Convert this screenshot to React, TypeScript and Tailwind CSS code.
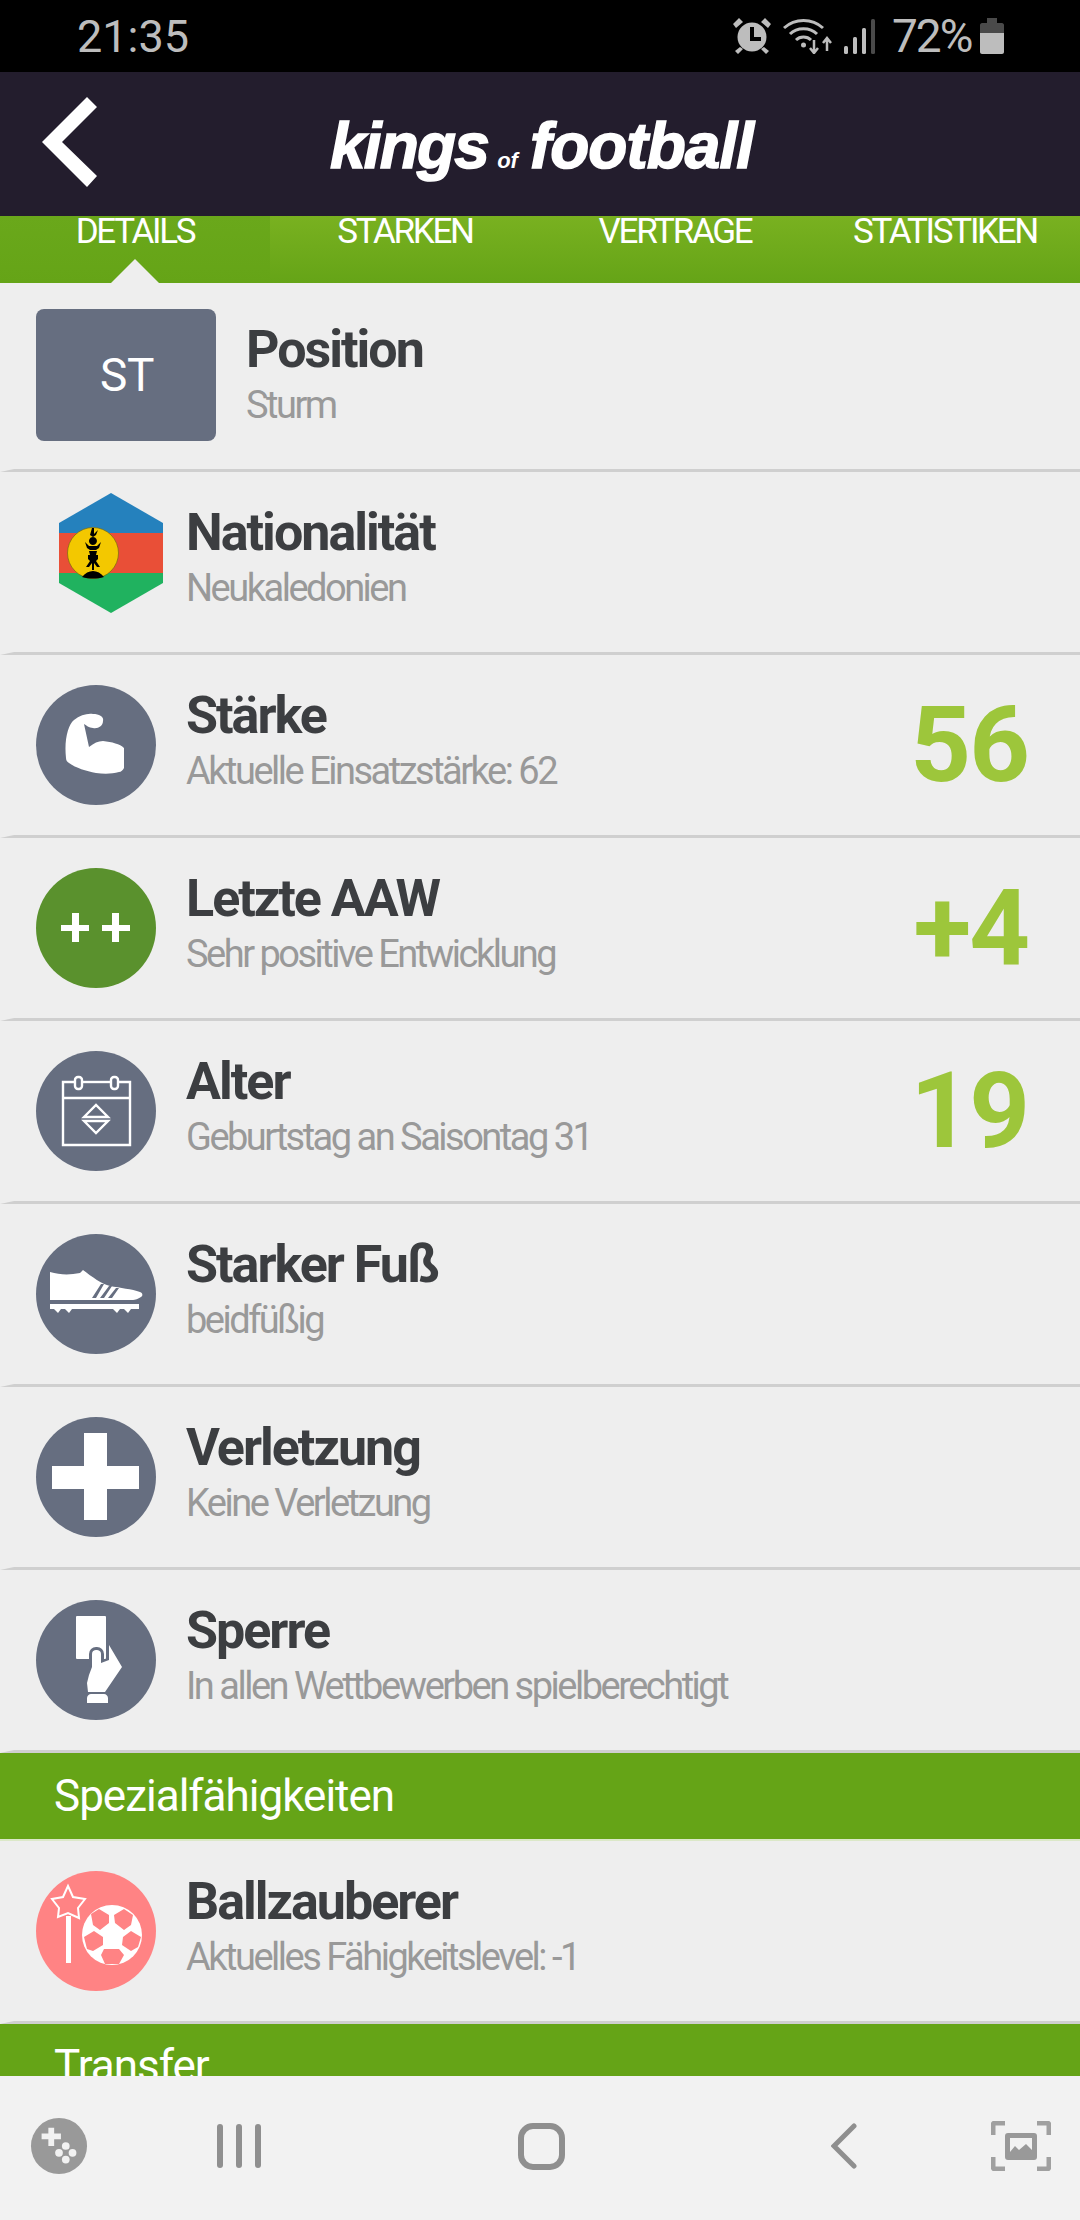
const stats = [
  { title: 'Stärke', sub: 'Aktuelle Einsatzstärke: 62', value: '56', icon: 'muscle' },
  { title: 'Letzte AAW', sub: 'Sehr positive Entwicklung', value: '+4', icon: 'plus', green: true },
  { title: 'Alter', sub: 'Geburtstag an Saisontag 31', value: '19', icon: 'calendar' },
  { title: 'Starker Fuß', sub: 'beidfüßig', icon: 'shoe' },
  { title: 'Verletzung', sub: 'Keine Verletzung', icon: 'cross' },
  { title: 'Sperre', sub: 'In allen Wettbewerben spielberechtigt', icon: 'card' },
]

const Divider = () => (
  <div className="h-0 w-full border-b-[3px] border-l-[14px] border-b-[#cfcfcf] border-l-transparent" />
)

const RowText = ({ title, sub }: { title: string; sub: string }) => (
  <div className="flex flex-col">
    <span className="text-[52px] leading-[52px] font-bold tracking-[-2px] whitespace-nowrap text-[#3c3e41]">{title}</span>
    <span className="text-[38px] leading-[58px] tracking-[-2.5px] whitespace-nowrap text-[#999999]">{sub}</span>
  </div>
)

const Glyph = ({ icon }: { icon: string }) => {
  if (icon === 'muscle') {
    return (
      <path
        fill="#fff"
        d="M30 73C28 55 32 40 38 35C44 30 52 28 57 29C64 29 68 32 67 36C67 41 62 44 57 43C53 43 50 40 48 39L53 62C58 58 62 56 67 56C76 57 84 59 88 63L88 83C87 85 85 87 83 87C76 89 68 89 60 88C50 86 40 83 33 78C31 77 30 75 30 73Z"
      />
    )
  }
  if (icon === 'plus') {
    return (
      <g fill="#fff">
        <rect x="25" y="57" width="28" height="6" />
        <rect x="36" y="45" width="7" height="29" />
        <rect x="66" y="57" width="28" height="6" />
        <rect x="76" y="45" width="7" height="29" />
      </g>
    )
  }
  if (icon === 'calendar') {
    return (
      <g fill="none" stroke="#fff" strokeWidth="2.4">
        <path d="M39 31H27V94H94V31H82" />
        <path d="M27 47H94" />
        <path d="M46 31H75" />
        <rect x="39" y="26" width="7" height="12" rx="3" />
        <rect x="75" y="26" width="7" height="12" rx="3" />
        <path d="M48 66L60 54L72 66Z" />
        <path d="M48 70L60 82L72 70Z" />
      </g>
    )
  }
  if (icon === 'shoe') {
    return (
      <g fill="#fff">
        <path d="M14 38C24 41 34 41 44 39L47 36C56 43 66 50 74 52C84 54 96 55 104 58C107 59 107 62 105 63C102 65 99 66 97 66H14Z" />
        <path d="M14 70H103V75H95L92 79L88 75H84L81 79L77 75H36L33 79L29 75H25L22 79L18 75H14Z" />
        <path d="M56 64L65 50H68L60 64ZM64 64L73 52H76L68 64ZM72 64L80 54H83L76 64Z" fill="#666e80" />
      </g>
    )
  }
  if (icon === 'cross') {
    return <path fill="#fff" d="M48 16H71V49H103V72H71V103H48V72H16V49H48Z" />
  }
  if (icon === 'card') {
    return (
      <g>
        <rect x="40" y="16" width="30" height="43" rx="1" fill="#fff" />
        <rect x="53" y="47" width="15" height="24" rx="7" fill="#666e80" />
        <path
          fill="#fff"
          d="M56 54C56 51 58 50 60 50C63 50 65 51 65 54V63L73 60V45L86 67L69 92H52L51 83L53 75L56 67Z"
        />
        <path d="M51 103V98C51 96 53 94 55 94H68C70 94 72 96 72 98V103Z" fill="#fff" />
      </g>
    )
  }
  return null
}

const CircleIcon = ({ icon, green }: { icon: string; green?: boolean }) => (
  <svg viewBox="0 0 120 120" className="h-[120px] w-[120px] shrink-0">
    <circle cx="60" cy="60" r="60" fill={green ? '#5a912d' : '#666e80'} />
    <Glyph icon={icon} />
  </svg>
)

const FlagIcon = () => (
  <svg viewBox="0 0 128 120" className="mb-[18px] h-[120px] w-[128px]">
    <defs>
      <clipPath id="hex">
        <path d="M75 0L127 30V90L75 120L23 90V30Z" />
      </clipPath>
    </defs>
    <g clipPath="url(#hex)">
      <rect x="20" y="0" width="108" height="40" fill="#2581bd" />
      <rect x="20" y="40" width="108" height="40" fill="#e94f37" />
      <rect x="20" y="80" width="108" height="40" fill="#20b25f" />
    </g>
    <circle cx="57" cy="60" r="25.5" fill="#f3c800" stroke="#7a6a10" strokeWidth="0.7" />
    <path fill="#000" d="M56 35H58V41L62 37L60 42L57 44L54 42ZM57 44A4 4 0 1 1 56.9 44ZM49 49L53 53H61L65 49L63 55L60 57H54L51 55ZM53 58H61L60 62H62V66L60 68L64 74H61L58 70V77H56V70L53 74H50L54 68L52 66V62H54ZM46 84C49 80 53 78 57 78C61 78 65 80 68 84C61 86 53 86 46 84Z" />
  </svg>
)

const BallIcon = () => (
  <svg viewBox="0 0 120 120" className="h-[120px] w-[120px] shrink-0">
    <circle cx="60" cy="60" r="60" fill="#ff8384" />
    <path d="M32.5 45V92" stroke="#fff" strokeWidth="5" fill="none" />
    <path d="M32 15L37 26L49 28L42 37L43 47L32 42L22 46L23 37L16 28L27 26Z" fill="#ff8384" stroke="#fff" strokeWidth="2" />
    <circle cx="76" cy="64" r="30" fill="#fff" />
    <path
      fill="#ff8384"
      d="M55 43L63 38L73 44L73 52L64 59L57 54ZM78 44L88 38L97 44L95 54L88 59L79 52ZM48 66L58 60L67 66L67 74L57 80L51 78ZM86 74L87 66L95 60L105 66L102 76L95 80ZM68 78H83L88 84L83 93H69L65 84Z"
    />
  </svg>
)

const StatusIcons = () => (
  <div className="flex items-center">
    <svg viewBox="0 0 38 36" className="h-[36px] w-[38px]" fill="#bdbdbd">
      <path d="M6 0L10 4L3 10L0 6ZM32 0L38 6L35 10L28 4Z" />
      <path d="M7 29L2 33L5 36L10 31ZM31 29L36 33L33 36L28 31Z" />
      <circle cx="19" cy="19" r="14.5" />
      <path d="M17 9H21V19H28V23H17Z" fill="#000" />
    </svg>
    <svg viewBox="0 0 50 36" className="ml-[12px] h-[36px] w-[50px]" fill="none" stroke="#bdbdbd">
      <path d="M1 10C12 0 29 0 40 10" strokeWidth="3" />
      <path d="M7 16C14 9 27 9 34 16" strokeWidth="3" />
      <path d="M13 22C17 18 24 18 28 22" strokeWidth="3" />
      <circle cx="20.5" cy="27" r="2.5" fill="#bdbdbd" stroke="none" />
      <path d="M31 22V34M27 30L31 35L35 30" strokeWidth="2.5" />
      <path d="M44 33V21M40 25L44 20L48 25" strokeWidth="2.5" />
    </svg>
    <svg viewBox="0 0 32 36" className="ml-[11px] h-[36px] w-[32px]">
      <rect x="0" y="28" width="4" height="8" rx="1.5" fill="#bdbdbd" />
      <rect x="9" y="19" width="4" height="17" rx="1.5" fill="#bdbdbd" />
      <rect x="18" y="10" width="4" height="26" rx="1.5" fill="#bdbdbd" />
      <rect x="27" y="1" width="4" height="35" rx="1.5" fill="#4a4a4a" />
    </svg>
    <span className="ml-[16px] w-[82px] text-[46px] leading-none tracking-[-2px] whitespace-nowrap text-[#bdbdbd]">72%</span>
    <svg viewBox="0 0 24 36" className="ml-[6px] h-[36px] w-[24px]">
      <path d="M7 0H17V5H22C23 5 24 6 24 7V15H0V7C0 6 1 5 2 5H7Z" fill="#4a4a4a" />
      <path d="M0 15H24V34C24 35 23 36 22 36H2C1 36 0 35 0 34Z" fill="#bdbdbd" />
    </svg>
  </div>
)

const Tabs = () => (
  <div className="flex h-[67px] shrink-0 bg-gradient-to-b from-[#79b120] to-[#65a417]">
    {['DETAILS', 'STARKEN', 'VERTRAGE', 'STATISTIKEN'].map((tab, i) => (
      <div key={tab} className={`relative flex w-[270px] justify-center ${i === 0 ? 'bg-gradient-to-b from-[#6aa81b] to-[#65a417]' : ''}`}>
        <span className="pt-[3px] text-[35px] leading-[26px] tracking-[-2.3px] text-white">{tab}</span>
        {i === 0 && (
          <svg viewBox="0 0 48 24" className="absolute bottom-0 left-[111px] h-[24px] w-[48px]">
            <path d="M24 0L48 24H0Z" fill="#eeeeee" />
          </svg>
        )}
      </div>
    ))}
  </div>
)

const NavBar = () => (
  <div className="flex h-[144px] shrink-0 items-center bg-[#f2f2f2] pb-[4px] pl-[30px]">
    <svg viewBox="0 0 58 60" className="h-[58px] w-[58px]">
      <circle cx="29" cy="30" r="29" fill="#999999" />
      <path d="M18 11H24V17H31V23H24V30H18V23H11V17H18Z" fill="#f2f2f2" />
      <circle cx="36" cy="30" r="4" fill="#f2f2f2" />
      <circle cx="29" cy="37" r="4" fill="#f2f2f2" />
      <circle cx="43" cy="37" r="4" fill="#f2f2f2" />
      <circle cx="36" cy="44" r="4" fill="#f2f2f2" />
    </svg>
    <div className="ml-[129px] flex gap-[13px]">
      <div className="h-[44px] w-[6px] rounded-full bg-[#8f8f8f]" />
      <div className="h-[44px] w-[6px] rounded-full bg-[#8f8f8f]" />
      <div className="h-[44px] w-[6px] rounded-full bg-[#8f8f8f]" />
    </div>
    <div className="ml-[257px] h-[47px] w-[47px] rounded-[15px] border-[6px] border-[#8f8f8f]" />
    <svg viewBox="0 0 26 46" className="ml-[266px] h-[46px] w-[26px]" fill="none" stroke="#8f8f8f" strokeWidth="5" strokeLinecap="round">
      <path d="M23 3L3 23L23 43" />
    </svg>
    <svg viewBox="0 0 60 50" className="ml-[134px] h-[50px] w-[60px]" fill="none">
      <path d="M14 2H4C3 2 2 3 2 4V14M46 2H56C57 2 58 3 58 4V14M14 48H4C3 48 2 47 2 46V36M46 48H56C57 48 58 47 58 46V36" stroke="#a0a0a0" strokeWidth="5" />
      <rect x="14" y="12" width="32" height="27" rx="3" fill="#999999" />
      <path d="M19 31L24 25L28 29L35 23L41 29V17H19Z" fill="#f2f2f2" />
    </svg>
  </div>
)

export default function App() {
  return (
    <div className="flex h-[2220px] w-[1080px] flex-col overflow-hidden bg-[#eeeeee] font-['Roboto',sans-serif]">
      <div className="flex h-[72px] shrink-0 items-center justify-between bg-black pr-[76px] pl-[77px]">
        <span className="text-[45px] leading-none text-[#bdbdbd]">21:35</span>
        <StatusIcons />
      </div>
      <div className="flex h-[144px] shrink-0 items-center bg-[#231d2d] pl-[41px]">
        <svg viewBox="0 0 56 90" className="mb-[5px] h-[90px] w-[56px]">
          <path d="M46 0L56 10L21 45L56 79L46 90L1 45Z" fill="#fff" />
        </svg>
        <div className="mt-[3px] ml-[233px] flex items-baseline font-['Liberation_Sans',sans-serif] text-white italic">
          <span className="text-[64px] leading-none font-bold tracking-[-1.8px] [-webkit-text-stroke:1.5px_white]">kings</span>
          <span className="ml-[9px] text-[22px] leading-none font-bold">of</span>
          <span className="ml-[12px] text-[64px] leading-none font-bold tracking-[-1px] [-webkit-text-stroke:1.5px_white]">football</span>
        </div>
      </div>
      <Tabs />
      <div className="min-h-0 flex-1 overflow-hidden">
        <div className="flex h-[186px] items-center pl-[36px]">
          <div className="mb-[2px] flex h-[132px] w-[180px] items-center justify-center rounded-[8px] bg-[#666e80] pl-[2px] text-[46px] tracking-[-0.5px] text-white">ST</div>
          <div className="mt-[6px] ml-[30px]">
            <RowText title="Position" sub="Sturm" />
          </div>
        </div>
        <Divider />
        <div className="flex h-[180px] items-center pl-[36px]">
          <div className="w-[150px]">
            <FlagIcon />
          </div>
          <RowText title="Nationalität" sub="Neukaledonien" />
        </div>
        <Divider />
        {stats.map((row) => (
          <div key={row.title}>
            <div className="flex h-[180px] items-center pr-[52px] pl-[36px]">
              <div className="w-[150px]">
                <CircleIcon icon={row.icon} green={row.green} />
              </div>
              <RowText title={row.title} sub={row.sub} />
              {row.value && (
                <span className="ml-auto text-[106px] leading-none font-bold tracking-[-2px] text-[#9dc63b]">{row.value}</span>
              )}
            </div>
            <Divider />
          </div>
        ))}
        <div className="flex h-[88px] items-center border-b-[2px] border-b-[#dbe8c8] bg-[#65a417] pl-[54px] text-[44px] tracking-[-1px] text-white">
          Spezialfähigkeiten
        </div>
        <div className="flex h-[180px] items-center pl-[36px]">
          <div className="w-[150px]">
            <BallIcon />
          </div>
          <RowText title="Ballzauberer" sub="Aktuelles Fähigkeitslevel: -1" />
        </div>
        <Divider />
        <div className="flex h-[84px] items-center bg-[#65a417] pl-[54px] text-[44px] tracking-[-1px] text-white">
          Transfer
        </div>
      </div>
      <NavBar />
    </div>
  )
}
